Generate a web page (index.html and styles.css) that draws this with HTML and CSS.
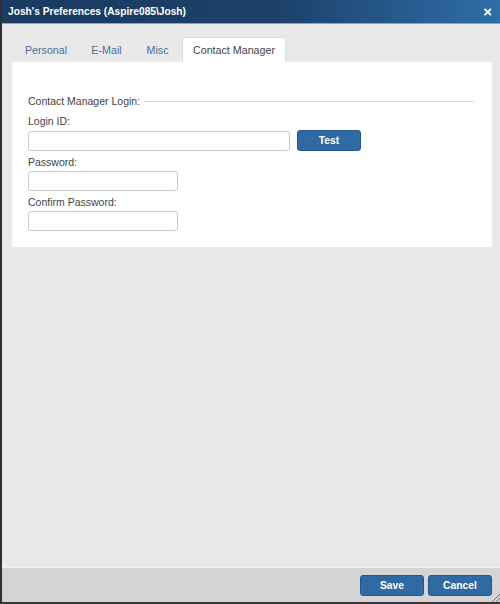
FILE: index.html
```html
<!DOCTYPE html>
<html>
<head>
<meta charset="utf-8">
<link rel="stylesheet" href="styles.css">
</head>
<body>
<div class="window">
  <div class="titlebar">
    <span class="title">Josh's Preferences (Aspire085\Josh)</span>
    <span class="close">×</span>
  </div>
  <div class="body">
    <div class="tabs">
      <div class="tab t1">Personal</div>
      <div class="tab t2">E-Mail</div>
      <div class="tab t3">Misc</div>
      <div class="tab active">Contact Manager</div>
    </div>
    <div class="panel">
      <div class="legend"><span>Contact Manager Login:</span><div class="rule"></div></div>
      <label class="lbl first">Login ID:</label>
      <div class="row">
        <input class="inp wide" type="text">
        <button class="btn test">Test</button>
      </div>
      <label class="lbl">Password:</label>
      <input class="inp short" type="password">
      <label class="lbl">Confirm Password:</label>
      <input class="inp short" type="password">
    </div>
  </div>
  <div class="footer">
    <button class="btn save">Save</button>
    <button class="btn cancel">Cancel</button>
    <span class="grip"></span>
  </div>
</div>
</body>
</html>
```
FILE: styles.css
```css
html, body { margin: 0; padding: 0; }
body {
  width: 500px;
  height: 604px;
  font-family: "Liberation Sans", Arial, sans-serif;
  font-size: 10.5px;
  color: #444;
  overflow: hidden;
}
.window {
  width: 500px;
  height: 604px;
  display: flex;
  flex-direction: column;
  box-sizing: border-box;
  border-left: 2px solid #2b2f36;
  border-bottom: 2px solid #3a3a3a;
  background: #e9e9e9;
}
.titlebar {
  height: 23px;
  flex: none;
  display: flex;
  align-items: center;
  justify-content: space-between;
  padding: 0 8px 0 6px;
  background: linear-gradient(to right, #1a3b62 0%, #1c406a 55%, #2f6ea8 100%);
  border-bottom: 1px solid #7fa6cc;
  color: #fff;
}
.title { font-weight: bold; font-size: 10.2px; }
.close { font-weight: bold; font-size: 15px; line-height: 1; margin-top: -1px; }
.body {
  flex: 1;
  padding: 13px 8px 0 10px;
  background: #e9e9e9;
}
.tabs {
  display: flex;
  height: 25px;
  align-items: stretch;
}
.tab {
  display: flex;
  align-items: center;
  justify-content: center;
  color: #4d6d98;
  font-size: 10.7px;
}
.t1 { width: 68px; }
.t2 { width: 53px; }
.t3 { width: 49px; }
.tab.active {
  width: 104px;
  background: #fff;
  color: #444;
  border: 1px solid #dcdcdc;
  border-bottom: none;
  box-sizing: border-box;
}
.panel {
  background: #fff;
  width: 480px;
  height: 185px;
  box-sizing: border-box;
  padding: 32px 16px 0 16px;
  display: flex;
  flex-direction: column;
  align-items: flex-start;
}
.legend {
  display: flex;
  align-items: center;
  width: 446px;
  height: 14px;
}
.legend .rule {
  flex: 1;
  height: 1px;
  background: #d6d6d6;
  margin-left: 4px;
}
.lbl {
  display: block;
  margin-top: 4px;
  height: 15px;
  line-height: 15px;
}
.lbl.first { margin-top: 6px; }
.row { display: flex; align-items: center; gap: 7px; margin-top: 1px; }
.inp {
  height: 20px;
  box-sizing: border-box;
  border: 1px solid #c9c9c9;
  border-radius: 3px;
  background: #fff;
  padding: 0 4px;
  margin: 0;
  font: inherit;
}
.wide { width: 262px; }
.short { width: 150px; margin-top: 1px; }
.btn {
  background: #2f6aa3;
  color: #fff;
  font-family: "Liberation Sans", Arial, sans-serif;
  font-weight: bold;
  font-size: 10.3px;
  border: 1px solid #255a8e;
  border-radius: 3px;
  height: 21px;
  padding: 0;
  margin: 0;
}
.test { width: 64px; }
.footer {
  height: 35px;
  flex: none;
  box-sizing: border-box;
  background: #d4d4d4;
  border-top: 1px solid #f2f2f2;
  display: flex;
  align-items: center;
  justify-content: flex-end;
  gap: 4px;
  padding: 0 8px 0 0;
  position: relative;
}
.save { width: 64px; }
.cancel { width: 64px; }
.grip {
  position: absolute;
  right: 0;
  bottom: 0;
  width: 8px;
  height: 8px;
  background: linear-gradient(135deg, transparent 45%, #777 45%, #777 55%, transparent 55%, transparent 70%, #777 70%, #777 80%, transparent 80%);
}
```
